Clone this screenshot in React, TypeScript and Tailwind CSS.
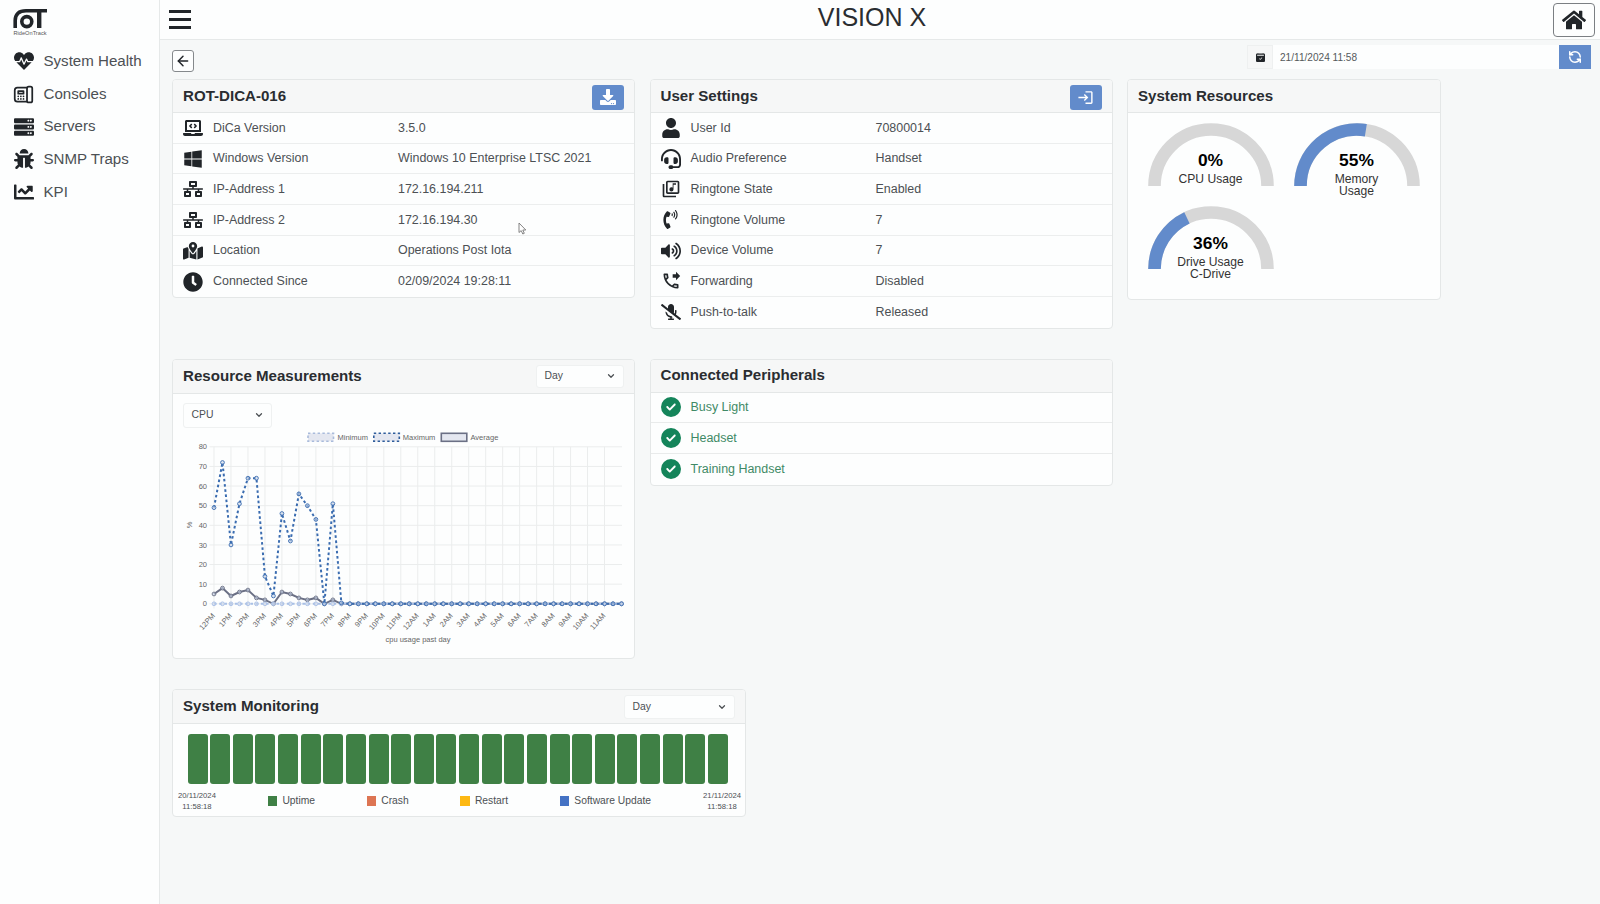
import React from "react";
import {
  FaBug,
  FaChartLine,
  FaClock,
  FaDownload,
  FaHeartbeat,
  FaHome,
  FaLaptopCode,
  FaMicrophoneSlash,
  FaNetworkWired,
  FaPhoneVolume,
  FaServer,
  FaUser,
  FaVolumeUp,
  FaWindows,
} from "react-icons/fa";
import { FaCircleCheck, FaHeadset, FaMapLocationDot } from "react-icons/fa6";
import { MdLogin, MdOutlineLibraryMusic, MdOutlinePhoneForwarded } from "react-icons/md";
import { TbDeviceLandlinePhone } from "react-icons/tb";
import { BsCalendar2CheckFill } from "react-icons/bs";
import { ArrowLeft, ChevronDown, RefreshCcw } from "lucide-react";

interface Row {
  icon: React.ReactNode;
  label: string;
  value: string;
}

const menu = [
  { icon: <FaHeartbeat size={20} />, label: "System Health" },
  { icon: <TbDeviceLandlinePhone size={23} />, label: "Consoles" },
  { icon: <FaServer size={20} />, label: "Servers" },
  { icon: <FaBug size={20} />, label: "SNMP Traps" },
  { icon: <FaChartLine size={20} />, label: "KPI" },
];

const deviceRows: Row[] = [
  { icon: <FaLaptopCode size={20} />, label: "DiCa Version", value: "3.5.0" },
  { icon: <FaWindows size={20} />, label: "Windows Version", value: "Windows 10 Enterprise LTSC 2021" },
  { icon: <FaNetworkWired size={20} />, label: "IP-Address 1", value: "172.16.194.211" },
  { icon: <FaNetworkWired size={20} />, label: "IP-Address 2", value: "172.16.194.30" },
  { icon: <FaMapLocationDot size={20} />, label: "Location", value: "Operations Post Iota" },
  { icon: <FaClock size={20} />, label: "Connected Since", value: "02/09/2024 19:28:11" },
];

const userRows: Row[] = [
  { icon: <FaUser size={20} />, label: "User Id", value: "70800014" },
  { icon: <FaHeadset size={20} />, label: "Audio Preference", value: "Handset" },
  { icon: <MdOutlineLibraryMusic size={20} />, label: "Ringtone State", value: "Enabled" },
  { icon: <FaPhoneVolume size={19} />, label: "Ringtone Volume", value: "7" },
  { icon: <FaVolumeUp size={20} />, label: "Device Volume", value: "7" },
  { icon: <MdOutlinePhoneForwarded size={20} />, label: "Forwarding", value: "Disabled" },
  { icon: <FaMicrophoneSlash size={20} />, label: "Push-to-talk", value: "Released" },
];

const peripherals = ["Busy Light", "Headset", "Training Handset"];

const gauges = [
  { percent: 0, lines: ["CPU Usage"] },
  { percent: 55, lines: ["Memory", "Usage"] },
  { percent: 36, lines: ["Drive Usage", "C-Drive"] },
];

const legend = [
  { color: "bg-[#3f8045]", label: "Uptime" },
  { color: "bg-[#dd7553]", label: "Crash" },
  { color: "bg-[#fdb813]", label: "Restart" },
  { color: "bg-[#4472c4]", label: "Software Update" },
];

const hours = [
  "12PM", "1PM", "2PM", "3PM", "4PM", "5PM", "6PM", "7PM", "8PM", "9PM", "10PM", "11PM",
  "12AM", "1AM", "2AM", "3AM", "4AM", "5AM", "6AM", "7AM", "8AM", "9AM", "10AM", "11AM",
];

// One sample per half hour, the rest of the day is zero
const fill = (values: number[]) => [...values, ...Array(49 - values.length).fill(0)];
const maximum = fill([49, 72, 30, 51, 64, 64, 14, 4, 46, 32, 56, 50, 43, 0, 51, 0.5]);
const average = fill([5, 8, 4, 6, 7, 3, 2, 0, 6, 5, 3, 2, 3, 0, 2]);
const minimum = fill([]);

const Logo: React.FC = () => (
  <svg width="36" height="30" viewBox="0 0 36 30" fill="none" stroke="#212529">
    <path d="M2.2 20V12.5Q2.2 2.8 13 2.8H34" strokeWidth="3.6" />
    <circle cx="13.8" cy="13.6" r="5" strokeWidth="3.6" />
    <path d="M26.2 3V20" strokeWidth="4.4" />
    <text x="0.5" y="27" fontSize="5.6" fill="#555" stroke="none" textLength="33">
      RideOnTrack
    </text>
  </svg>
);

interface CardProps {
  title: string;
  className: string;
  headerClass?: string;
  action?: React.ReactNode;
  children: React.ReactNode;
}

const Card: React.FC<CardProps> = ({ title, className, headerClass = "h-[33px]", action, children }) => (
  <div className={`shrink-0 border border-[#e4e7e7] rounded-[4px] bg-[#fdfefe] ${className}`}>
    <div
      className={`flex items-center justify-between pl-2.5 pr-2.5 rounded-t-[3px] bg-[#f6f7f7] border-b border-[#e4e7e7] ${headerClass}`}
    >
      <h2 className="text-[15.1px] font-bold text-[#2a2d31]">{title}</h2>
      {action}
    </div>
    {children}
  </div>
);

const RowList: React.FC<{ rows: Row[] }> = ({ rows }) => (
  <ul className="text-[12.45px] text-[#4c5054]">
    {rows.map((row, index) => (
      <li key={index} className="flex items-center h-[30.7px] pl-2.5 border-b border-[#eceeee] last:border-b-0">
        <span className="flex justify-center w-5 text-[#212529]">{row.icon}</span>
        <span className="w-[195px] pl-2.5">{row.label}</span>
        <span>{row.value}</span>
      </li>
    ))}
  </ul>
);

const Select: React.FC<{ value: string; className: string }> = ({ value, className }) => (
  <button
    className={`flex items-center justify-between px-[7.5px] rounded-[3px] border border-[#eff1f1] bg-[#fdfefe] text-[10.4px] text-[#4c5054] ${className}`}
  >
    {value}
    <ChevronDown size={10} strokeWidth={3} className="text-[#4c5054]" />
  </button>
);

const Gauge: React.FC<{ percent: number; lines: string[] }> = ({ percent, lines }) => {
  const angle = Math.PI * (1 - percent / 100);
  const x = 63 + 56.5 * Math.cos(angle);
  const y = 63 - 56.5 * Math.sin(angle);
  return (
    <svg width="126" height="83" viewBox="0 0 126 83" fill="none">
      <path d="M6.5 63A56.5 56.5 0 0 1 119.5 63" stroke="#d7d7d7" strokeWidth="12.6" />
      {percent > 0 && <path d={`M6.5 63A56.5 56.5 0 0 1 ${x} ${y}`} stroke="#628bcb" strokeWidth="12.6" />}
      <text x="62.5" y="42.6" textAnchor="middle" fontSize="17.4" fontWeight="bold" fill="#000">
        {percent}%
      </text>
      {lines.map((line, index) => (
        <text key={line} x="62.5" y={59.8 + index * 12.4} textAnchor="middle" fontSize="12.1" fill="#333">
          {line}
        </text>
      ))}
    </svg>
  );
};

const px = (index: number) => 41 + index * 8.49;
const py = (value: number) => 174.8 - value * 1.9625;
const points = (values: number[]) => values.map((v, i) => `${px(i)},${py(v)}`).join(" ");

const Series: React.FC<{ values: number[]; stroke: string; dash?: string }> = ({ values, stroke, dash }) => (
  <g stroke={stroke}>
    <polyline points={points(values)} fill="none" strokeWidth="2" strokeDasharray={dash} />
    {values.map((v, i) => (
      <circle key={i} cx={px(i)} cy={py(v)} r="1.9" fill="#c8d3e8" fillOpacity="0.6" strokeWidth="0.9" />
    ))}
  </g>
);

const CpuChart: React.FC = () => (
  <svg width="461" height="222" viewBox="0 0 461 222" fontSize="7.5" fill="#666" className="block mt-[1.5px]">
    <g fill="#e4e7f0" strokeWidth="1.6">
      <rect x="135" y="4.3" width="25.5" height="8" stroke="#a9bbdb" strokeDasharray="2.4 2.4" />
      <rect x="200.8" y="4.3" width="25.5" height="8" stroke="#2f5d9b" strokeDasharray="2.4 2.4" />
      <rect x="268.3" y="4.3" width="25.5" height="8" stroke="#6b7085" />
    </g>
    <text x="164.5" y="10.6">Minimum</text>
    <text x="229.8" y="10.6">Maximum</text>
    <text x="297.5" y="10.6">Average</text>
    {[0, 10, 20, 30, 40, 50, 60, 70, 80].map((value) => (
      <g key={value}>
        <path d={`M36.5 ${py(value)}H449`} stroke="#ebeded" />
        <text x="34" y={py(value) + 2.6} textAnchor="end">
          {value}
        </text>
      </g>
    ))}
    {hours.map((hour, index) => (
      <g key={hour}>
        <path d={`M${px(index * 2)} 17.8V179.5`} stroke="#ebeded" />
        <text
          x={px(index * 2) + 1.5}
          y="187"
          textAnchor="end"
          transform={`rotate(-48 ${px(index * 2) + 1.5} 187)`}
        >
          {hour}
        </text>
      </g>
    ))}
    <text x="19" y="96" textAnchor="middle" transform="rotate(-90 19 96)">
      %
    </text>
    <text x="245" y="213.2" textAnchor="middle">
      cpu usage past day
    </text>
    <Series values={average} stroke="#6b7085" />
    <Series values={minimum} stroke="#a9c0e6" dash="2.6 2.6" />
    <Series values={maximum} stroke="#3a6cb0" dash="2.6 2.6" />
  </svg>
);

const App: React.FC = () => {
  return (
    <div className="relative flex h-screen overflow-hidden bg-[#f6f8f8] font-['Liberation_Sans',Arial,sans-serif]">
      <aside className="w-40 shrink-0 border-r border-[#e6e9e9] bg-[#fdfefe] pl-[13px] pt-2">
        <Logo />
        <ul className="pt-[7px] text-[15.1px] text-[#4c5054]">
          {menu.map((item) => (
            <li key={item.label} className="flex items-center h-[32.7px]">
              <span className="flex justify-center w-[21px] text-[#212529]">{item.icon}</span>
              <span className="pl-[9.5px] whitespace-nowrap">{item.label}</span>
            </li>
          ))}
        </ul>
      </aside>

      <div className="flex flex-col flex-1 min-w-0">
        <header className="flex items-center justify-between h-10 shrink-0 border-b border-[#e6e9e9] bg-[#fdfefe] pl-[9px] pr-[5px]">
          <button className="flex flex-col gap-[5px]">
            <span className="w-[22px] h-[3px] bg-[#212529]" />
            <span className="w-[22px] h-[3px] bg-[#212529]" />
            <span className="w-[22px] h-[3px] bg-[#212529]" />
          </button>
          <h1 className="pb-1 text-[25px] text-[#2a2d31]">VISION X</h1>
          <button className="flex items-center justify-center w-[42px] h-[34px] rounded-[4px] border border-[#7b7f83] text-[#212529]">
            <FaHome size={24} />
          </button>
        </header>

        <main className="flex-1 pl-3 pr-[9px]">
          <div className="flex items-start justify-between h-[39px]">
            <button className="flex items-center justify-center w-[22px] h-[22px] mt-2.5 rounded-[3px] border border-[#85898c] bg-[#fdfefe] text-[#212529]">
              <ArrowLeft size={16} strokeWidth={2.2} className="shrink-0" />
            </button>
            <div className="flex h-6 mt-[5px]">
              <span className="flex items-center justify-center w-[26px] border border-[#eef0f0] bg-[#f6f7f7] text-[#212529]">
                <BsCalendar2CheckFill size={9} />
              </span>
              <span className="flex items-center w-[286px] pl-[7px] pt-px bg-[#fdfefe] text-[10.1px] text-[#55595c]">21/11/2024 11:58</span>
              <button className="flex items-center justify-center w-8 bg-[#628bcb] text-white">
                <RefreshCcw size={14} strokeWidth={2.6} />
              </button>
            </div>
          </div>

          <div className="flex items-start gap-[14.5px] h-[279.5px]">
            <Card
              title="ROT-DICA-016"
              className="w-[463px]"
              action={
                <button className="flex items-center justify-center w-8 h-[25px] mt-0.5 rounded-[3px] bg-[#628bcb] text-white">
                  <FaDownload size={16} />
                </button>
              }
            >
              <RowList rows={deviceRows} />
            </Card>
            <Card
              title="User Settings"
              className="w-[463px]"
              action={
                <button className="flex items-center justify-center w-8 h-[25px] mt-0.5 rounded-[3px] bg-[#628bcb] text-white">
                  <MdLogin size={17} />
                </button>
              }
            >
              <RowList rows={userRows} />
            </Card>
            <Card title="System Resources" className="w-[314px] h-[221px]">
              <div className="grid grid-cols-[126px_126px] gap-x-5 pl-[19.5px] pt-2.5">
                {gauges.map((gauge, index) => (
                  <Gauge key={index} percent={gauge.percent} lines={gauge.lines} />
                ))}
              </div>
            </Card>
          </div>

          <div className="flex items-start gap-[14.5px] h-[330.5px]">
            <Card
              title="Resource Measurements"
              className="w-[463px] h-[300px]"
              headerClass="h-[34px]"
              action={<Select value="Day" className="w-[88px] h-[23px]" />}
            >
              <div className="pl-2.5 pt-[9px]">
                <Select value="CPU" className="w-[89px] h-[25px]" />
              </div>
              <CpuChart />
            </Card>
            <Card title="Connected Peripherals" className="w-[463px]">
              <ul className="text-[12.45px] text-[#3f8a66]">
                {peripherals.map((name) => (
                  <li key={name} className="flex items-center h-[30.7px] pl-2.5 border-b border-[#e9ebeb] last:border-b-0">
                    <FaCircleCheck size={20} className="text-[#14845a]" />
                    <span className="pl-2.5">{name}</span>
                  </li>
                ))}
              </ul>
            </Card>
          </div>

          <Card
            title="System Monitoring"
            className="w-[574px] h-[128px]"
            headerClass="h-[34px]"
            action={<Select value="Day" className="w-[111px] h-[24px]" />}
          >
            <div className="flex gap-[2.63px] pl-[14.5px] pt-[10px]">
              {Array.from({ length: 24 }).map((_, index) => (
                <div key={index} className="w-5 h-[50px] rounded-[3px] bg-[#3f8045]" />
              ))}
            </div>
            <div className="flex items-center justify-between pl-[5px] pr-1 pt-[5.5px] text-center text-[7.7px] leading-[11.4px] text-[#4c5054]">
              <span>
                20/11/2024
                <br />
                11:58:18
              </span>
              <div className="flex flex-1 justify-between pl-[52px] pr-[52px] text-[10.3px]">
                {legend.map((item) => (
                  <span key={item.label} className="flex items-center gap-[5px]">
                    <span className={`w-[9.5px] h-[9.5px] ${item.color}`} />
                    {item.label}
                  </span>
                ))}
              </div>
              <span>
                21/11/2024
                <br />
                11:58:18
              </span>
            </div>
          </Card>
        </main>
      </div>

      {/* Mouse pointer */}
      <svg className="absolute left-[518px] top-[222px]" width="9" height="13" viewBox="0 0 9 13">
        <path d="M1 1V10.5L3.2 8.6L4.8 12L6.3 11.3L4.8 8H7.8Z" fill="#fff" stroke="#777" strokeWidth="0.9" />
      </svg>
    </div>
  );
};

export default App;
